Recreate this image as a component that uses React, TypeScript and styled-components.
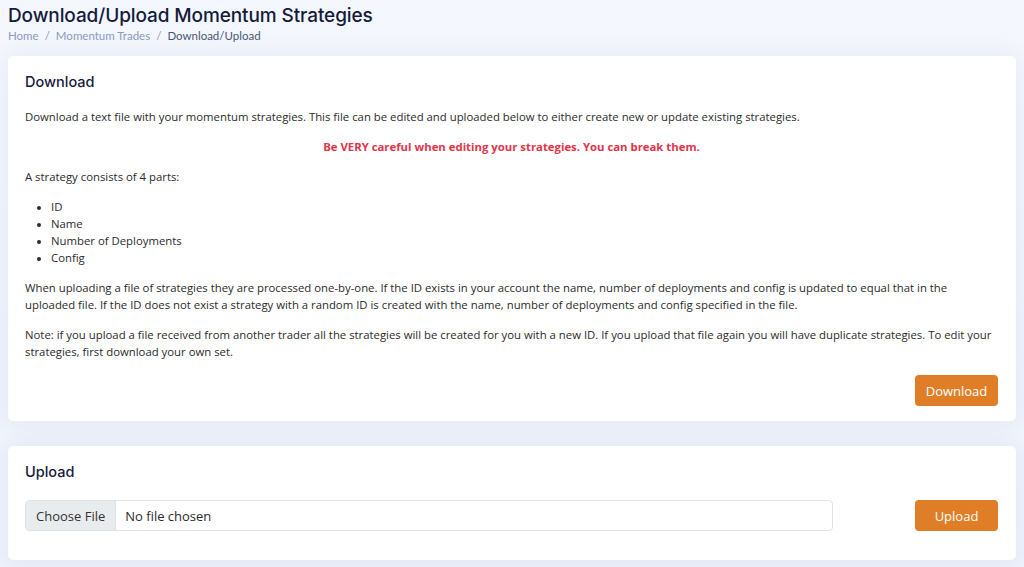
import styled, { createGlobalStyle } from "styled-components";

const GlobalStyle = createGlobalStyle`
    html, body {
        margin: 0;
        padding: 0;
    }
    body {
        background: linear-gradient(180deg, #f4f7fd 0%, #eef2fb 100%);
        font-family: "Open Sans", "DejaVu Sans", sans-serif;
        color: #2b2b2b;
        min-height: 567px;
    }
`;

const Page = styled.main`
    padding: 4px 8px 8px;
`;

const PageTitle = styled.div`
    margin-bottom: 12px;
    h1 {
        margin: 0;
        font-family: Inter, "Noto Sans", sans-serif;
        font-size: 19px;
        font-weight: 500;
        line-height: 24px;
        color: #151b3b;
        letter-spacing: -0.1px;
    }
`;

const Crumbs = styled.ol`
    display: flex;
    list-style: none;
    margin: 0;
    padding: 0;
    font-family: Lato, "Noto Sans", sans-serif;
    font-size: 11.5px;
    line-height: 16px;
    color: #8a9bbd;
    li + li::before {
        content: "/";
        padding: 0 6px;
        color: #8a9bbd;
    }
`;

const Crumb = styled.li<{ $active?: boolean }>`
    color: ${p => (p.$active ? "#4a5674" : "#8a9bbd")};
`;

const Card = styled.section<{ $bottom?: number }>`
    background: #fff;
    border-radius: 5px;
    box-shadow: 0 0 24px rgba(1, 41, 112, 0.07);
    padding: 15px 18px ${p => p.$bottom ?? 15}px 17px;
    margin-bottom: 25px;
`;

const CardTitle = styled.h5<{ $gap?: number }>`
    margin: 0 0 ${p => p.$gap ?? 15}px;
    font-family: Inter, "Noto Sans", sans-serif;
    font-size: 14.5px;
    font-weight: 500;
    line-height: 22px;
    color: #151b3b;
`;

const Text = styled.p<{ $warn?: boolean }>`
    margin: 0 0 13px;
    font-size: 11.35px;
    line-height: 17px;
    color: ${p => (p.$warn ? "#e0344a" : "#2b2b2b")};
    font-weight: ${p => (p.$warn ? 700 : 400)};
    text-align: ${p => (p.$warn ? "center" : "left")};
`;

const Parts = styled.ul`
    margin: 0 0 13px;
    padding-left: 26px;
    font-size: 11.35px;
    line-height: 17px;
    li::marker {
        font-size: 10px;
    }
`;

const Actions = styled.div`
    display: flex;
    justify-content: flex-end;
    margin-top: 15px;
`;

const OrangeButton = styled.button`
    height: 31px;
    padding: 0 10px;
    min-width: 83px;
    border: none;
    border-radius: 4px;
    background: #e07e27;
    color: #fff;
    font-family: "Open Sans", sans-serif;
    font-size: 13px;
    cursor: pointer;
`;

const UploadRow = styled.div`
    display: flex;
    align-items: center;
    justify-content: space-between;
    gap: 20px;
`;

const FileField = styled.label`
    flex: 0 0 808px;
    display: flex;
    height: 31px;
    border: 1px solid #dfe2e6;
    border-radius: 4px;
    overflow: hidden;
    font-size: 13px;
    box-sizing: border-box;
    cursor: pointer;
    input {
        display: none;
    }
`;

const FileButton = styled.span`
    display: flex;
    align-items: center;
    padding: 0 10px;
    background: #e9ecef;
    border-right: 1px solid #dfe2e6;
    color: #333;
`;

const FileName = styled.span`
    display: flex;
    align-items: center;
    padding: 0 9px;
    color: #2b2b2b;
`;

export default function App() {
    return (
        <>
            <GlobalStyle />
            <Page>
                <PageTitle>
                    <h1>Download/Upload Momentum Strategies</h1>
                    <Crumbs>
                        <Crumb>Home</Crumb>
                        <Crumb>Momentum Trades</Crumb>
                        <Crumb $active>Download/Upload</Crumb>
                    </Crumbs>
                </PageTitle>

                <Card>
                    <CardTitle>Download</CardTitle>
                    <Text>
                        Download a text file with your momentum strategies. This file can be edited and uploaded below to either create new or update existing strategies.
                    </Text>
                    <Text $warn>Be VERY careful when editing your strategies. You can break them.</Text>
                    <Text>A strategy consists of 4 parts:</Text>
                    <Parts>
                        <li>ID</li>
                        <li>Name</li>
                        <li>Number of Deployments</li>
                        <li>Config</li>
                    </Parts>
                    <Text>
                        When uploading a file of strategies they are processed one-by-one. If the ID exists in your account the name, number of deployments and config is updated to equal that in the uploaded file. If the ID does not exist a strategy with a random ID is created with the name, number of deployments and config specified in the file.
                    </Text>
                    <Text>
                        Note: if you upload a file received from another trader all the strategies will be created for you with a new ID. If you upload that file again you will have duplicate strategies. To edit your strategies, first download your own set.
                    </Text>
                    <Actions>
                        <OrangeButton>Download</OrangeButton>
                    </Actions>
                </Card>

                <Card $bottom={29}>
                    <CardTitle $gap={17}>Upload</CardTitle>
                    <UploadRow>
                        <FileField>
                            <input type="file" />
                            <FileButton>Choose File</FileButton>
                            <FileName>No file chosen</FileName>
                        </FileField>
                        <OrangeButton>Upload</OrangeButton>
                    </UploadRow>
                </Card>
            </Page>
        </>
    );
}
